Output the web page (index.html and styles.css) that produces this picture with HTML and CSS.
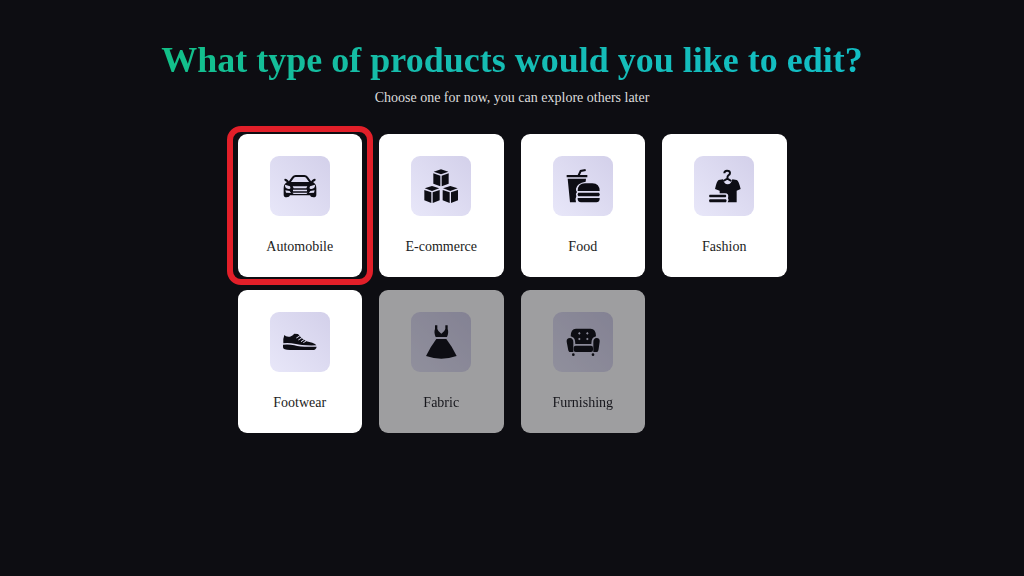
FILE: index.html
```html
<!DOCTYPE html>
<html lang="en">
<head>
<meta charset="utf-8">
<meta name="viewport" content="width=device-width, initial-scale=1">
<title>Choose a product type</title>
<link rel="stylesheet" href="styles.css">
</head>
<body>
<main class="picker">
	<h1 class="title">What type of products would you like to edit?</h1>
	<p class="subtitle">Choose one for now, you can explore others later</p>

	<div class="cards">
		<button type="button" class="card selected">
			<span class="tile">
				<svg viewBox="0 0 180 180" aria-hidden="true">
					<path d="M56 82L69 64Q72 60 77 60H103Q108 60 111 64L124 82" fill="none" stroke="#0d0d14" stroke-width="6"/>
					<path d="M43 69Q49 67 54 73L58 78H122L126 73Q131 67 137 69Q138 75 131 77L129 78Q139 84 139 97V116Q139 124 130 124Q121 124 120 118H60Q59 124 50 124Q41 124 41 116V97Q41 84 51 78L49 77Q42 75 43 69Z"/>
					<path class="cut" d="M45 86L60 91Q64 100 56 99Q44 97 45 86ZM135 86L120 91Q116 100 124 99Q136 97 135 86ZM68 91H112L109 97H71ZM46 103L59 105L63 111L48 110ZM134 103L121 105L117 111L132 110ZM69 101H111V106H69ZM67 110H113L109 114H71Z"/>
				</svg>
			</span>
			<span class="label">Automobile</span>
		</button>

		<button type="button" class="card">
			<span class="tile">
				<svg viewBox="0 0 180 180" aria-hidden="true">
					<g id="box">
						<path d="M90 40L112 47L90 55L68 47Z"/>
						<path d="M67 52L88 59V91L67 83Z"/>
						<path d="M113 52L92 59V91L113 83Z"/>
					</g>
					<use href="#box" x="-27" y="50"/>
					<use href="#box" x="28" y="50"/>
				</svg>
			</span>
			<span class="label">E-commerce</span>
		</button>

		<button type="button" class="card">
			<span class="tile">
				<svg viewBox="0 0 180 180" aria-hidden="true">
					<path d="M76 60L83 45L98 42" fill="none" stroke="#0d0d14" stroke-width="6"/>
					<path d="M41 57H103V64H41ZM44 68H99L98 77Q72 81 69 98Q68 104 72 108Q66 114 70 121Q65 130 69 139H51Z"/>
					<path d="M74 105Q74 83 96 82H118Q140 83 140 105ZM76 110H138Q143 115 138 121H76Q71 115 76 110ZM74 126H140V130Q139 139 130 139H84Q75 139 74 130Z"/>
				</svg>
			</span>
			<span class="label">Food</span>
		</button>

		<button type="button" class="card">
			<span class="tile">
				<svg viewBox="0 0 180 180" aria-hidden="true">
					<path d="M91 52Q91 44 99 44Q108 44 108 51Q108 56 103 58Q100 60 100 68L88 75M100 68L112 75" fill="none" stroke="#0d0d14" stroke-width="6"/>
					<path d="M74 72L87 70Q90 85 101 85Q112 85 115 70L128 72Q134 74 140 99L128 104V139H101Q106 132 102 127Q106 112 93 112H77V104L63 99Q68 75 74 72Z"/>
					<path d="M47 116H95Q99 120 95 124H47Q43 120 47 116ZM47 130H96Q100 135 96 139H47Q43 135 47 130Z"/>
				</svg>
			</span>
			<span class="label">Fashion</span>
		</button>

		<button type="button" class="card">
			<span class="tile">
				<svg viewBox="0 0 180 180" aria-hidden="true">
					<path d="M43 69Q48 76 60 74Q68 71 73 65L84 66Q94 81 109 88L127 92Q137 95 139 100Q94 101 78 96Q56 92 40 94Q39 78 43 69Z"/>
					<path d="M39 98Q58 96 73 100Q94 106 140 104Q138 114 128 114H60Q39 114 39 106Z"/>
					<path class="lace" d="M79 78L89 72M85 84L95 78M93 89L102 83M100 92L108 87"/>
				</svg>
			</span>
			<span class="label">Footwear</span>
		</button>

		<button type="button" class="card" disabled>
			<span class="tile">
				<svg viewBox="0 0 180 180" aria-hidden="true">
					<path d="M72 40H79V51Q81 59 91 65Q101 59 103 51V40H110V51Q114 61 108 75H74Q68 61 72 51Z"/>
					<path d="M76 81H106Q125 106 137 132Q91 148 45 132Q57 106 76 81Z"/>
				</svg>
			</span>
			<span class="label">Fabric</span>
		</button>

		<button type="button" class="card" disabled>
			<span class="tile">
				<svg viewBox="0 0 180 180" aria-hidden="true">
					<path d="M53 73Q53 50 69 50H113Q129 50 129 73Q118 76 116 86L115 96H67L66 86Q64 76 53 73Z"/>
					<path d="M41 89Q40 78 51 78Q61 79 61 90V120H52Q46 120 45 110ZM140 89Q141 78 131 78Q121 79 121 90V120H130Q136 120 137 110Z"/>
					<rect x="62" y="101" width="58" height="19" rx="6"/>
					<circle cx="61" cy="128" r="4"/>
					<circle cx="120" cy="128" r="4"/>
					<path class="cut" d="M79 60L83 64L79 68L75 64ZM103 60L107 64L103 68L99 64ZM79 77L83 81L79 85L75 81ZM103 77L107 81L103 85L99 81Z"/>
				</svg>
			</span>
			<span class="label">Furnishing</span>
		</button>
	</div>
</main>
</body>
</html>
```

FILE: styles.css
```css
* {
	box-sizing: border-box;
}

body {
	margin: 0;
	background: #0d0d12;
	font-family: "Liberation Serif", "Times New Roman", serif;
}

.picker {
	display: flex;
	flex-direction: column;
	align-items: center;
	padding: 38px 16px;
}

.title {
	margin: 0;
	font-size: 36px;
	line-height: 44px;
	text-align: center;
	color: transparent;
	background: linear-gradient(135deg, #12c085, #16bcb0 40%, #12bec6);
	-webkit-background-clip: text;
	background-clip: text;
}

.subtitle {
	margin: 6px 0 26px;
	font-size: 14px;
	line-height: 20px;
	text-align: center;
	color: #dcdcdc;
}

/* product types */
.cards {
	display: grid;
	grid-template-columns: repeat(4, 1fr);
	gap: 13px 17px;
	width: 100%;
	max-width: 549px;
}

.card {
	position: relative;
	display: flex;
	flex-direction: column;
	align-items: center;
	gap: 20px;
	padding: 22px 0 19px;
	border: 0;
	border-radius: 9px;
	background: #fff;
	color: #1c1c22;
	font: inherit;
	cursor: pointer;
}

.card:disabled {
	opacity: .6;
	cursor: default;
}

/* red frame around the chosen type */
.selected::after {
	content: "";
	position: absolute;
	inset: -8px -11px;
	border: 6px solid #e21f29;
	border-radius: 14px;
	pointer-events: none;
}

.tile {
	width: 60px;
	height: 60px;
	border-radius: 9px;
	background: linear-gradient(to top right, #e8e7f9, #d3d0ea);
}

.tile svg {
	display: block;
	fill: #0d0d14;
}

.tile .cut {
	fill: #dddbf1;
}

.tile .lace {
	fill: none;
	stroke: #dddbf1;
	stroke-width: 3;
}

.label {
	font-size: 14px;
	line-height: 22px;
}
```
